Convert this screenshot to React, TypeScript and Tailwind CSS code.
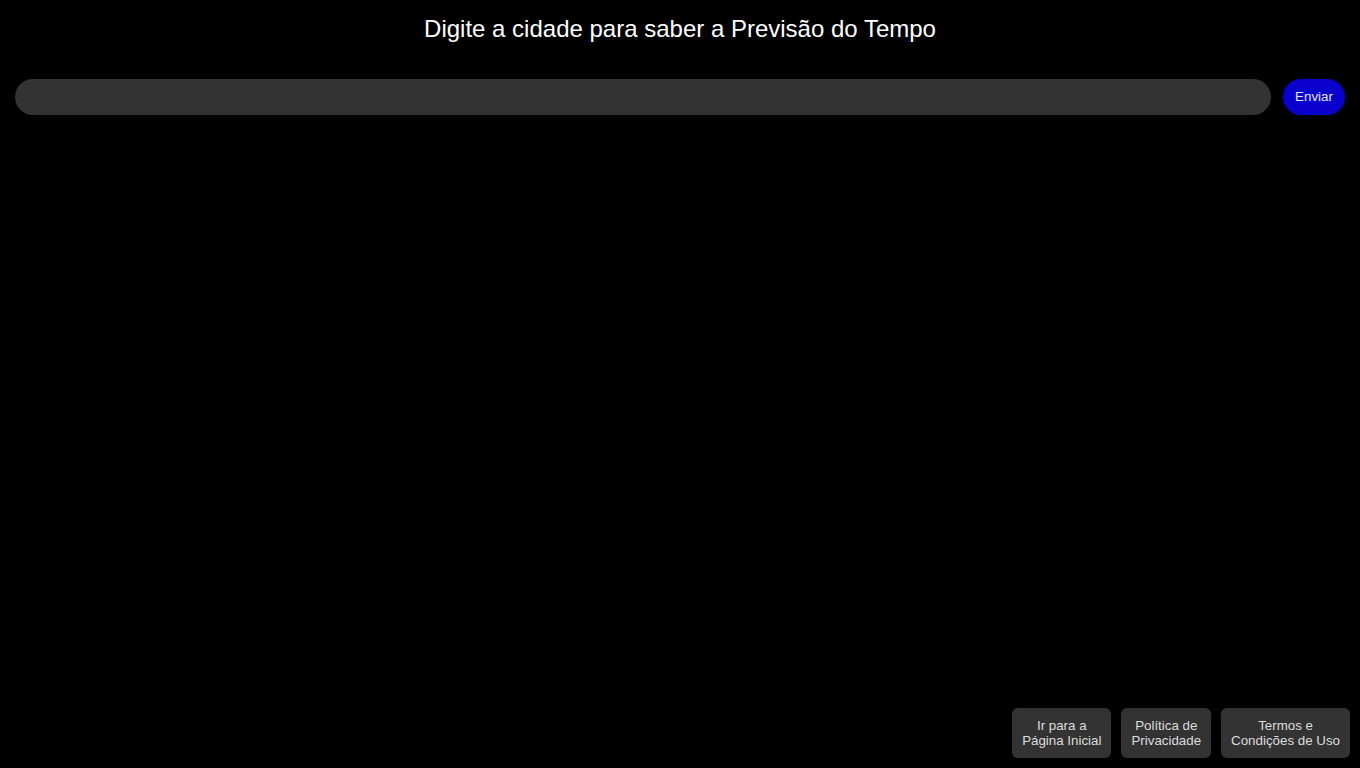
export default function App() {
  return (
    <div
      className="flex h-screen flex-col bg-black text-white"
      style={{ fontFamily: '"Liberation Sans", Arial, sans-serif' }}
    >
      {/* Title */}
      <h1 className="pt-[15px] text-center text-[24px] leading-[28px] font-normal">
        Digite a cidade para saber a Previsão do Tempo
      </h1>

      {/* Search */}
      <div className="mt-[36px] flex gap-[12px] px-[15px]">
        <input
          type="text"
          className="h-[36px] flex-1 rounded-[18px] bg-[#333333] px-4 text-[14px] text-white outline-none"
        />
        <button className="h-[36px] w-[62px] rounded-[18px] bg-[#0a00cd] text-[13.333px] text-[#e6e6ff]">
          Enviar
        </button>
      </div>

      {/* Footer */}
      <footer className="mt-auto flex justify-end gap-[10px] p-[10px]">
        <button className="h-[50px] rounded-[6px] bg-[#333333] px-[10px] text-[13.333px] leading-[15px] text-[#dddddd]">
          Ir para a<br />Página Inicial
        </button>
        <button className="h-[50px] rounded-[6px] bg-[#333333] px-[10px] text-[13.333px] leading-[15px] text-[#dddddd]">
          Política de<br />Privacidade
        </button>
        <button className="h-[50px] rounded-[6px] bg-[#333333] px-[10px] text-[13.333px] leading-[15px] text-[#dddddd]">
          Termos e<br />Condições de Uso
        </button>
      </footer>
    </div>
  );
}
